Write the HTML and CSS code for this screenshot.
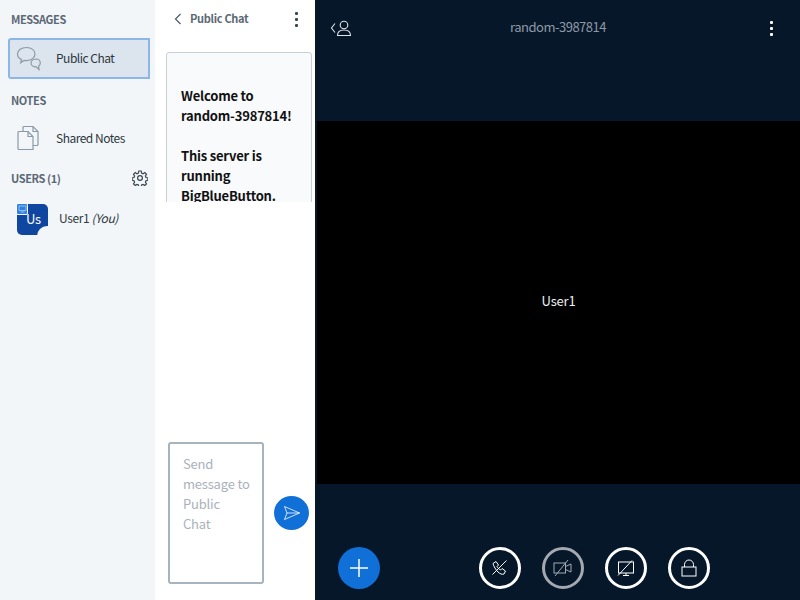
FILE: index.html
```html
<!DOCTYPE html>
<html lang="en">
<head>
    <meta charset="UTF-8">
    <meta name="viewport" content="width=device-width, initial-scale=1.0">
    <title>BigBlueButton</title>
    <link rel="stylesheet" href="styles.css">
</head>
<body>
    <div class="app">
        <aside class="sidebar">
            <h2 class="section-title">MESSAGES</h2>
            <div class="list-item active">
                <svg class="item-icon" width="26" height="26" viewBox="0 0 26 26" fill="none" stroke="#8b9aa8" stroke-width="1.2">
                    <path d="M10.5 1.5c-5 0-9 2.800-9 6.500 0 2.500 1.700 4.500 4 5.600l-.8 3 3.600-2.200c.7.100 1.400.2 2.200.2 5 0 8.500-3 8.500-6.600s-3.500-6.500-8.500-6.500z"/>
                    <path d="M20.500 13c-3 .2-5.500 1.800-5.500 4s2.300 3.800 5 3.800l3 2.700-.4-3.400c1-.7 1.700-1.800 1.700-3 0-2.200-1.800-4.100-3.800-4.100z"/>
                </svg>
                <span class="item-label">Public Chat</span>
            </div>
            <h2 class="section-title notes-title">NOTES</h2>
            <div class="list-item">
                <svg class="item-icon" width="26" height="26" viewBox="0 0 26 26" fill="none" stroke="#8b9aa8" stroke-width="1.2">
                    <path d="M3 6.500h9l5 5v13H3a1 1 0 0 1-1-1V7.500a1 1 0 0 1 1-1z"/>
                    <path d="M12 6.500v5h5"/>
                    <path d="M7 6.500V2.500a1 1 0 0 1 1-1h9l5 5v13a1 1 0 0 1-1 1h-4"/>
                    <path d="M17 1.500v5h5"/>
                </svg>
                <span class="item-label">Shared Notes</span>
            </div>
            <div class="users-head">
                <h2 class="section-title">USERS (1)</h2>
                <svg width="16" height="16" viewBox="0 0 16 16" fill="none" stroke="#3b4650" stroke-width="1.200">
                    <circle cx="8" cy="8" r="2.400"/>
                    <path d="M6.800 1h2.400l.4 2 1.500.7 1.800-1.100 1.600 1.700-1.100 1.700.6 1.500 2 .4v2.300l-2 .5-.6 1.400 1.100 1.800-1.700 1.600-1.700-1.100-1.500.6-.4 2H6.800l-.4-2-1.500-.6-1.700 1.100-1.700-1.600 1.100-1.800-.6-1.400-2-.5V7.900l2-.4.600-1.500-1.100-1.700 1.700-1.700 1.700 1.100 1.500-.7z"/>
                </svg>
            </div>
            <div class="user-row">
                <div class="avatar">
                    <span class="avatar-text">Us</span>
                    <span class="avatar-notch"></span>
                    <span class="avatar-badge">
                        <svg width="9" height="8" viewBox="0 0 9 8" fill="none" stroke="#cfe3fa" stroke-width="0.600">
                            <rect x="1" y="1" width="7" height="4.500"/>
                            <path d="M2.500 7h4"/>
                        </svg>
                    </span>
                </div>
                <span class="user-name">User1 <i>(You)</i></span>
            </div>
        </aside>

        <section class="chat">
            <header class="chat-head">
                <div class="chat-title">
                    <svg width="8" height="12" viewBox="0 0 8 12" fill="none" stroke="#4e5a66" stroke-width="1.200">
                        <path d="M6.500 1L1.500 6l5 5"/>
                    </svg>
                    <span>Public Chat</span>
                </div>
                <div class="dots dots-dark"><i></i><i></i><i></i></div>
            </header>
            <div class="messages">
                <div class="message-box">
                    <p>Welcome to<br>random-3987814!</p>
                    <p>This server is<br>running<br>BigBlueButton.</p>
                </div>
            </div>
            <form class="composer">
                <div class="composer-input">Send<br>message to<br>Public<br>Chat</div>
                <button type="button" class="send-btn">
                    <svg width="18" height="16" viewBox="0 0 18 16" fill="none" stroke="#fff" stroke-width="0.800">
                        <path d="M1.500 1.500L16.500 8 1.500 14.500 4 8z"/>
                        <path d="M4 8h12.500"/>
                    </svg>
                </button>
            </form>
        </section>

        <main class="main">
            <header class="navbar">
                <div class="user-toggle">
                    <svg width="22" height="18" viewBox="0 0 22 18" fill="none" stroke="#dfe4e9" stroke-width="1.100">
                        <path d="M5 4.500L1.500 9 5 13.500"/>
                        <circle cx="14" cy="6" r="3.800"/>
                        <path d="M7.500 16.500c0-3.500 2.800-5.500 6.500-5.500s6.500 2 6.500 5.500z"/>
                    </svg>
                </div>
                <div class="meeting-name">random-3987814</div>
                <div class="dots"><i></i><i></i><i></i></div>
            </header>
            <div class="stage">User1</div>
            <footer class="actions">
                <button type="button" class="plus-btn">
                    <svg width="20" height="20" viewBox="0 0 20 20" stroke="#fff" stroke-width="1.500">
                        <path d="M10 1v18M1 10h18"/>
                    </svg>
                </button>
                <div class="controls">
                    <button type="button" class="circle-btn">
                        <svg width="18" height="18" viewBox="0 0 18 18" fill="none" stroke="#fff" stroke-width="1">
                            <path d="M15.500 1.500L1.500 15.500"/>
                            <path d="M2 4.500L5 2.500l2.500 3.500-1.500 1.500c.8 1.500 1.800 2.500 3.500 3.500l1.500-1.500 3.500 2.500-1.500 3c-2 .8-4-.2-6-2S2.500 7 2 4.500z"/>
                        </svg>
                    </button>
                    <button type="button" class="circle-btn off">
                        <svg width="20" height="18" viewBox="0 0 20 18" fill="none" stroke="#a3a9af" stroke-width="1">
                            <rect x="1" y="4" width="11.500" height="10"/>
                            <path d="M12.500 7.500L18 5v8l-5.500-2.500"/>
                            <path d="M15 1L2 17"/>
                        </svg>
                    </button>
                    <button type="button" class="circle-btn">
                        <svg width="18" height="18" viewBox="0 0 18 18" fill="none" stroke="#fff" stroke-width="1">
                            <rect x="1.500" y="3" width="15" height="11"/>
                            <path d="M6 16.500h6M9 14v2.500"/>
                            <path d="M15 1.500L1 16.500"/>
                        </svg>
                    </button>
                    <button type="button" class="circle-btn">
                        <svg width="16" height="18" viewBox="0 0 16 18" fill="none" stroke="#fff" stroke-width="1">
                            <rect x="1" y="8" width="14" height="9"/>
                            <path d="M3.500 8V5.500a4.500 4.500 0 0 1 9 0V8"/>
                        </svg>
                    </button>
                </div>
            </footer>
        </main>
    </div>
</body>
</html>
```

FILE: styles.css
```css
* {
    box-sizing: border-box;
}

body {
    margin: 0;
    font-family: "Noto Sans CJK SC", "Noto Sans", sans-serif;
    font-size: 14px;
    color: #2d3740;
    overflow: hidden;
}

.app {
    display: flex;
    width: 800px;
    height: 600px;
}

/* left column */
.sidebar {
    width: 155px;
    flex: none;
    background: #f3f6f9;
    padding-top: 11px;
}

.section-title {
    margin: 0;
    padding-left: 11px;
    font-size: 11px;
    line-height: 16px;
    font-weight: 700;
    letter-spacing: -0.4px;
    color: #5b6875;
}

.list-item {
    display: flex;
    align-items: center;
    height: 41px;
    margin-left: 8px;
    width: 142px;
    padding-left: 8px;
    font-size: 12px;
    letter-spacing: -0.5px;
}

.list-item.active {
    margin-top: 11px;
    background: #dce4ed;
    border: 2px solid #8cb6e8;
    border-radius: 3px 0 0 3px;
    padding: 0 0 3px 6px;
}

.item-icon {
    flex: none;
    margin-right: 14px;
}

.list-item.active .item-icon {
    margin-top: 3px;
}

.notes-title {
    margin-top: 13px;
    margin-bottom: 9px;
}

.item-label {
    white-space: nowrap;
}

.users-head {
    display: flex;
    justify-content: space-between;
    align-items: center;
    margin-top: 12px;
    padding-right: 7px;
}

.user-row {
    display: flex;
    align-items: center;
    margin-top: 18px;
    padding-left: 17px;
    font-size: 12px;
    letter-spacing: -0.4px;
}

.avatar {
    position: relative;
    width: 31px;
    height: 31px;
    background: #0f46a0;
    border-radius: 5px;
    color: #fff;
    margin-right: 11px;
    flex: none;
}

.avatar-text {
    display: block;
    padding: 6px 0 0 9px;
    font-size: 13px;
    line-height: 18px;
    letter-spacing: -0.4px;
}

.avatar-badge {
    position: absolute;
    left: -1px;
    top: -1px;
    width: 12px;
    height: 12px;
    background: #2f80e0;
    border: 1px solid #fff;
    border-radius: 2px;
    display: flex;
    align-items: center;
    justify-content: center;
}

.avatar-notch {
    position: absolute;
    right: -1px;
    bottom: -1px;
    width: 12px;
    height: 10px;
    border-radius: 10px 0 0 0;
    background: #f3f6f9;
}

.user-name {
    padding-bottom: 5px;
}

/* chat column */
.chat {
    width: 160px;
    flex: none;
    background: #fff;
    display: flex;
    flex-direction: column;
}

.chat-head {
    display: flex;
    align-items: center;
    justify-content: space-between;
    height: 38px;
    padding: 0 17px 0 19px;
}

.chat-title {
    display: flex;
    align-items: center;
    gap: 8px;
    font-size: 11px;
    font-weight: 700;
    letter-spacing: -0.3px;
    color: #5b6875;
}

.chat-title span {
    padding-bottom: 2px;
}

.dots {
    display: flex;
    flex-direction: column;
    gap: 3px;
}

.dots i {
    display: block;
    width: 3px;
    height: 3px;
    background: #fff;
    border-radius: 1px;
}

.dots-dark i {
    background: #3b4650;
}

.messages {
    height: 150px;
    margin: 14px 3px 0 11px;
    overflow: hidden;
}

.message-box {
    background: #f8fafc;
    border: 1px solid #c6ced6;
    border-radius: 3px;
    padding: 33px 14px 20px;
    font-size: 13px;
    line-height: 20px;
    font-weight: 700;
    letter-spacing: -0.2px;
    color: #111;
}

.message-box p {
    margin: 0 0 20px;
}

.composer {
    display: flex;
    align-items: center;
    margin: auto 0 16px 13px;
}

.composer-input {
    width: 96px;
    height: 142px;
    border: 2px solid #a7b3bd;
    border-radius: 3px;
    padding: 10px 0 0 13px;
    font-size: 13px;
    line-height: 20px;
    letter-spacing: -0.2px;
    color: #a9b2ba;
}

.send-btn {
    width: 35px;
    height: 34px;
    margin: -1px 0 0 10px;
    padding: 0;
    border: none;
    border-radius: 50%;
    background: #1070d8;
    display: flex;
    align-items: center;
    justify-content: center;
}

/* main column */
.main {
    flex: 1;
    background: #06172a;
    display: flex;
    flex-direction: column;
}

.navbar {
    height: 121px;
    flex: none;
    display: flex;
    justify-content: space-between;
    padding: 19px 27px 0 15px;
}

.user-toggle {
    height: 18px;
}

.meeting-name {
    margin-right: 6px;
    font-size: 13px;
    line-height: 16px;
    letter-spacing: -0.5px;
    color: #8d99a5;
}

.navbar .dots {
    height: 15px;
    margin-top: 2px;
}

.stage {
    height: 363px;
    flex: none;
    margin-left: 2px;
    padding: 0 0 5px;
    background: #000;
    color: #eef1f4;
    display: flex;
    align-items: center;
    justify-content: center;
    font-size: 13px;
    letter-spacing: -0.2px;
}

.actions {
    flex: 1;
    display: flex;
    justify-content: space-between;
    padding: 63px 90px 0 23px;
}

.plus-btn {
    width: 42px;
    height: 42px;
    padding: 0;
    border: none;
    border-radius: 50%;
    background: #1070d8;
    display: flex;
    align-items: center;
    justify-content: center;
}

.controls {
    display: flex;
    gap: 21px;
}

.circle-btn {
    width: 42px;
    height: 42px;
    padding: 0;
    border: 3px solid #fff;
    border-radius: 50%;
    background: transparent;
    display: flex;
    align-items: center;
    justify-content: center;
}

.circle-btn.off {
    border-color: #a3a9af;
}
```
